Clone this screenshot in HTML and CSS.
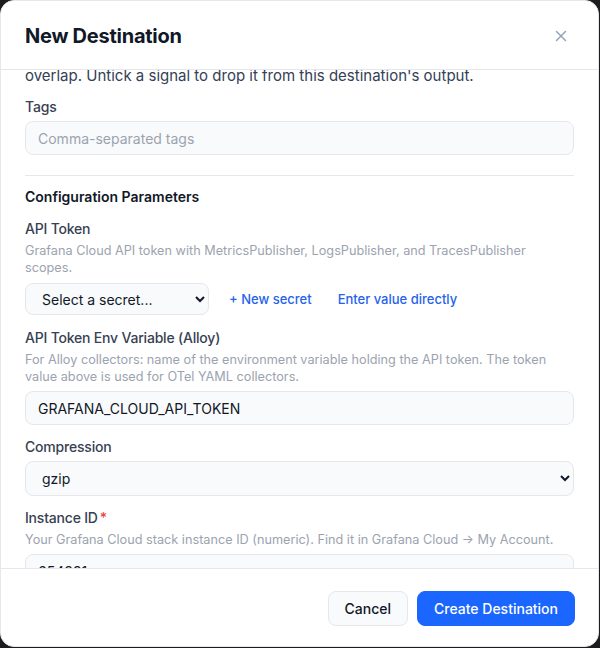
FILE: index.html
```html
<!DOCTYPE html>
<html lang="en">
<head>
<meta charset="utf-8">
<title>New Destination</title>
<link rel="stylesheet" href="styles.css">
</head>
<body>
<div class="backdrop">
  <div class="modal">
    <header class="modal-header">
      <h2 class="modal-title">New Destination</h2>
      <button class="close-btn" aria-label="Close">
        <svg width="12" height="12" viewBox="0 0 12 12" fill="none" stroke="currentColor" stroke-width="1.5" stroke-linecap="round"><path d="M1.5 1.5l9 9M10.5 1.5l-9 9"/></svg>
      </button>
    </header>
    <div class="modal-body">
      <div class="body-inner">
        <p class="intro">overlap. Untick a signal to drop it from this destination's output.</p>
        <div class="field">
          <label class="label">Tags</label>
          <input class="input" type="text" placeholder="Comma-separated tags">
        </div>
        <hr class="divider">
        <h3 class="section-title">Configuration Parameters</h3>
        <div class="field">
          <label class="label">API Token</label>
          <p class="help">Grafana Cloud API token with MetricsPublisher, LogsPublisher, and TracesPublisher scopes.</p>
          <div class="secret-row">
            <select class="select select-secret"><option>Select a secret...</option></select>
            <a class="link link-new" href="#">+ New secret</a>
            <a class="link link-direct" href="#">Enter value directly</a>
          </div>
        </div>
        <div class="field">
          <label class="label">API Token Env Variable (Alloy)</label>
          <p class="help">For Alloy collectors: name of the environment variable holding the API token. The token value above is used for OTel YAML collectors.</p>
          <input class="input" type="text" value="GRAFANA_CLOUD_API_TOKEN">
        </div>
        <div class="field">
          <label class="label">Compression</label>
          <select class="select select-full"><option>gzip</option><option>none</option></select>
        </div>
        <div class="field">
          <label class="label">Instance ID<span class="req">*</span></label>
          <p class="help">Your Grafana Cloud stack instance ID (numeric). Find it in Grafana Cloud → My Account.</p>
          <input class="input" type="text" value="654321">
        </div>
      </div>
    </div>
    <footer class="modal-footer">
      <button class="btn btn-secondary">Cancel</button>
      <button class="btn btn-primary">Create Destination</button>
    </footer>
  </div>
</div>
</body>
</html>
```
FILE: styles.css
```css
* { box-sizing: border-box; }
html, body {
  margin: 0;
  padding: 0;
  background: #1c1c1e;
  font-family: Inter, "Noto Sans", "Liberation Sans", sans-serif;
  color: #111827;
}
.backdrop {
  width: 600px;
  height: 648px;
}
.modal {
  width: 599px;
  height: 647px;
  background: #ffffff;
  border: 1px solid #e5e7eb;
  border-radius: 14px;
  display: flex;
  flex-direction: column;
  overflow: hidden;
}
.modal-header {
  height: 69px;
  flex: none;
  display: flex;
  align-items: center;
  justify-content: space-between;
  padding: 1px 27px 0 24px;
  border-bottom: 1px solid #e5e7eb;
}
.modal-title {
  margin: 0;
  font-size: 20px;
  font-weight: 700;
  color: #111827;
  letter-spacing: -0.25px;
}
.close-btn {
  background: none;
  border: 0;
  padding: 4px;
  color: #94a3b8;
  display: flex;
  cursor: pointer;
}
.modal-body {
  flex: 1;
  overflow: hidden;
  padding: 0 24px;
}
.body-inner {
  margin-top: -4px;
}
.intro {
  margin: 0 0 11px;
  font-size: 15px;
  line-height: 20px;
  color: #334155;
}
.field {
  margin-bottom: 12px;
}
.label {
  display: block;
  font-size: 14px;
  line-height: 20px;
  font-weight: 500;
  letter-spacing: -0.2px;
  color: #374151;
  margin-bottom: 4px;
}
.req {
  color: #ef4444;
  margin-left: 2px;
}
.help {
  margin: -1px 0 6px;
  font-size: 12.7px;
  line-height: 17px;
  color: #9ca3af;
}
.input {
  display: block;
  width: 100%;
  height: 34px;
  padding: 0 12px;
  background: #f8fafc;
  border: 1px solid #e5e7eb;
  border-radius: 8px;
  font-family: inherit;
  font-size: 14px;
  color: #111827;
  outline: none;
}
.input::placeholder {
  color: #9ca3af;
}
.select {
  height: 32px;
  padding: 0 8px 0 12px;
  background-color: #f8fafc;
  border: 1px solid #e5e7eb;
  border-radius: 8px;
  font-family: inherit;
  font-size: 14px;
  color: #111827;
  outline: none;
}
.select-secret {
  width: 184px;
}
.select-full {
  display: block;
  width: 100%;
  height: 35px;
}
.secret-row {
  display: flex;
  align-items: center;
  min-height: 34px;
}
.link {
  font-size: 13px;
  font-weight: 500;
  color: #2563eb;
  text-decoration: none;
}
.link-new { margin-left: 20px; }
.link-direct { margin-left: 26px; }
.divider {
  border: 0;
  border-top: 1px solid #e5e7eb;
  margin: 20px 0 11px;
}
.section-title {
  margin: 0 0 12px;
  font-size: 14px;
  line-height: 20px;
  font-weight: 600;
  color: #111827;
}
.modal-footer {
  flex: none;
  height: 78px;
  border-top: 1px solid #e5e7eb;
  display: flex;
  align-items: center;
  justify-content: flex-end;
  gap: 9px;
  padding: 1px 23px 0 24px;
}
.btn {
  height: 35px;
  padding: 0 16px;
  border-radius: 8px;
  font-family: inherit;
  font-size: 14px;
  font-weight: 500;
  cursor: pointer;
}
.btn-secondary {
  background: #f8fafc;
  border: 1px solid #e5e7eb;
  color: #111827;
}
.btn-primary {
  background: #1a66ff;
  border: 1px solid #1a66ff;
  color: #ffffff;
}
```
